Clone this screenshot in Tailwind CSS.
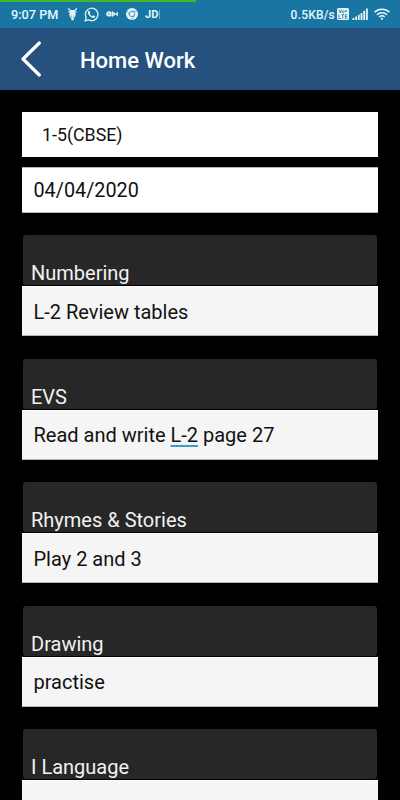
<!DOCTYPE html>
<html lang="en">
<head>
    <meta charset="UTF-8">
    <meta name="viewport" content="width=device-width, initial-scale=1.0">
    <title>Home Work</title>
    <script src="https://cdn.jsdelivr.net/npm/@tailwindcss/browser@4"></script>
</head>
<body class="bg-black font-['Roboto',sans-serif] h-screen overflow-hidden flex flex-col">
    <!-- Status bar -->
    <div class="relative h-7 shrink-0 bg-[#1976a3] text-[#e4f8fc] flex items-center justify-between pl-[11px] pr-[10px]">
        <div class="absolute top-0 left-0 w-[196px] h-[2px] bg-[#42b72a]"></div>
        <div class="flex items-center">
            <span class="text-[12.7px] font-medium w-[56px] whitespace-nowrap leading-none pt-[2px]">9:07 PM</span>
            <!-- Scooter -->
            <svg class="w-[11px] h-[14px]" viewBox="0 0 12 14" fill="none" stroke="currentColor" stroke-width="1.300">
                <path d="M1.200 1l2.800 2.500M10.800 1L8 3.500M4 5L1.500 4.500M8 5l2.500-.5"/>
                <path d="M4 2.500h4l1.500 5L8.500 11H7.300v2.800H4.700V11H3.500L2.500 7.500z" fill="currentColor" stroke="none"/>
                <path d="M4.700 8.500V11M7.300 8.500V11" stroke="#1976a3" stroke-width=".6"/>
            </svg>
            <!-- WhatsApp -->
            <svg class="w-[15px] h-[15px] ml-[6px]" viewBox="0 0 24 24" fill="currentColor">
                <path fill="none" stroke="currentColor" stroke-width="2" d="M2 22l1.500-5.300A10 10 0 1 1 7.200 20.500z"/>
                <path d="M8.600 6.500c-.4-.8-1-.7-1.500-.2-2.500 2.500.4 6.600 3 8.900 2.400 2 5.500 3.300 7.200 1.300.7-.9.700-1.800 0-2.200l-2.100-1c-.9-.4-1.200 1.600-2 1.500-1.700-.5-3.500-2.300-4-3.700-.1-.7 1.100-1.200.8-2z"/>
            </svg>
            <!-- OLX -->
            <svg class="w-3 h-2 ml-[7px]" viewBox="0 0 12 8" fill="none" stroke="currentColor">
                <circle cx="2.800" cy="4" r="1.700" stroke-width="1.900"/>
                <path d="M6.300 1.200v5.600" stroke-width="1.400"/>
                <path d="M7.600 2l2 2-2 2zM11.800 2l-2.200 2 2.200 2z" fill="currentColor" stroke-width=".6"/>
            </svg>
            <!-- Chrome -->
            <svg class="w-3 h-3 ml-[8px]" viewBox="0 0 24 24">
                <circle cx="12" cy="12" r="12" fill="currentColor"/>
                <circle cx="12" cy="12" r="5.500" fill="none" stroke="#1976a3" stroke-width="1.400"/>
                <path d="M12 6.500h10.500M7.200 14.500L2.500 6M16.800 14.500L11 23.500" stroke="#1976a3" stroke-width="1"/>
            </svg>
            <span class="ml-[7px] text-[11px] font-bold leading-none">JD</span>
            <span class="ml-[1px] w-px h-[9px] bg-[#e4f8fc]/40"></span>
        </div>
        <div class="flex items-center">
            <span class="text-[12px] font-medium leading-none tracking-[0.2px] pt-px">0.5KB/s</span>
            <!-- VoLTE -->
            <svg class="w-3 h-3 ml-[2px]" viewBox="0 0 12 12">
                <rect width="12" height="12" rx="1.500" fill="currentColor"/>
                <path d="M2 1.500l1.300 3.500L4.600 1.500M8 3h2M9 2v2M1.800 6.500v4h2M4.500 6.700h2.600M5.800 6.700v4M10.300 6.700H8.300v3.700h2M8.300 8.500h1.800" fill="none" stroke="#1976a3" stroke-width=".8"/>
                <circle cx="6.200" cy="3.800" r="1.100" fill="none" stroke="#1976a3" stroke-width=".7"/>
            </svg>
            <!-- Signal -->
            <svg class="w-4 h-3 ml-[3px]" viewBox="0 0 16 12" fill="currentColor">
                <path d="M.5 10h1.800v2H.5zM3.200 8.500H5V12H3.200zM5.900 6.800h1.800V12H5.900zM8.600 5h1.800v7H8.600zM11.300 2.800h1.800V12h-1.800zM14 .6h1.800V12H14z"/>
            </svg>
            <!-- Wi-Fi -->
            <svg class="w-4 h-3 ml-[6px]" viewBox="0 0 16 12" fill="none" stroke="currentColor" stroke-width="1.600">
                <path d="M.6 4.300a10.500 10.500 0 0 1 14.800 0M3 6.800a7 7 0 0 1 10 0M5.300 9a3.900 3.900 0 0 1 5.400 0"/>
                <circle cx="8" cy="10.800" r="1.100" fill="currentColor" stroke="none"/>
            </svg>
        </div>
    </div>

    <!-- App bar -->
    <header class="h-[62px] shrink-0 bg-[#26517f] flex items-center">
        <svg class="w-5 h-9 ml-[21px]" viewBox="0 0 20 36" fill="none" stroke="#fff" stroke-width="3.200" stroke-linecap="round" stroke-linejoin="round">
            <path d="M18.300 2L2 18l16.300 16"/>
        </svg>
        <h1 class="ml-[39px] mt-[3px] text-[22px] leading-none font-medium text-white">Home Work</h1>
    </header>

    <main class="px-[22px] pt-[22px]">
        <div class="h-[45px] bg-white flex items-center pl-5 pt-px text-[17.8px] text-[#111]">1-5(CBSE)</div>
        <div class="mt-[10px] h-[46px] bg-white border-y border-[#b5b5b5] flex items-center pl-[11.500px] pt-[2px] text-[19.800px] text-[#111]">04/04/2020</div>

        <div class="mt-[22.400px] flex flex-col gap-[22.400px]">
            <section class="h-[101px]">
                <h2 class="mx-px h-[50px] rounded-[3px] bg-[#272727] pl-2 pt-[26px] text-[20px] leading-6 text-[#f2f2f2]">Numbering</h2>
                <p class="mt-px h-[50px] bg-[#f5f5f5] border-y border-t-white border-b-[#b5b5b5] pl-[11.500px] pt-px flex items-center text-[20px] text-[#111]">L-2 Review tables</p>
            </section>
            <section class="h-[101px]">
                <h2 class="mx-px h-[50px] rounded-[3px] bg-[#272727] pl-2 pt-[26px] text-[20px] leading-6 text-[#f2f2f2]">EVS</h2>
                <p class="mt-px h-[50px] bg-[#f5f5f5] border-y border-t-white border-b-[#b5b5b5] pl-[11.500px] pt-px flex items-center text-[20px] text-[#111] whitespace-pre">Read and write <span class="underline decoration-[#37a0c4] decoration-2 underline-offset-[3px]">L-2</span> page 27</p>
            </section>
            <section class="h-[101px]">
                <h2 class="mx-px h-[50px] rounded-[3px] bg-[#272727] pl-2 pt-[26px] text-[20px] leading-6 text-[#f2f2f2]">Rhymes &amp; Stories</h2>
                <p class="mt-px h-[50px] bg-[#f5f5f5] border-y border-t-white border-b-[#b5b5b5] pl-[11.500px] pt-px flex items-center text-[20px] text-[#111]">Play 2 and 3</p>
            </section>
            <section class="h-[101px]">
                <h2 class="mx-px h-[50px] rounded-[3px] bg-[#272727] pl-2 pt-[26px] text-[20px] leading-6 text-[#f2f2f2]">Drawing</h2>
                <p class="mt-px h-[50px] bg-[#f5f5f5] border-y border-t-white border-b-[#b5b5b5] pl-[11.500px] pt-px flex items-center text-[20px] text-[#111]">practise</p>
            </section>
            <section class="h-[101px]">
                <h2 class="mx-px h-[50px] rounded-[3px] bg-[#272727] pl-2 pt-[26px] text-[20px] leading-6 text-[#f2f2f2]">I Language</h2>
                <p class="mt-px h-[50px] bg-[#f5f5f5] border-y border-t-white border-b-[#b5b5b5]"></p>
            </section>
        </div>
    </main>
</body>
</html>
